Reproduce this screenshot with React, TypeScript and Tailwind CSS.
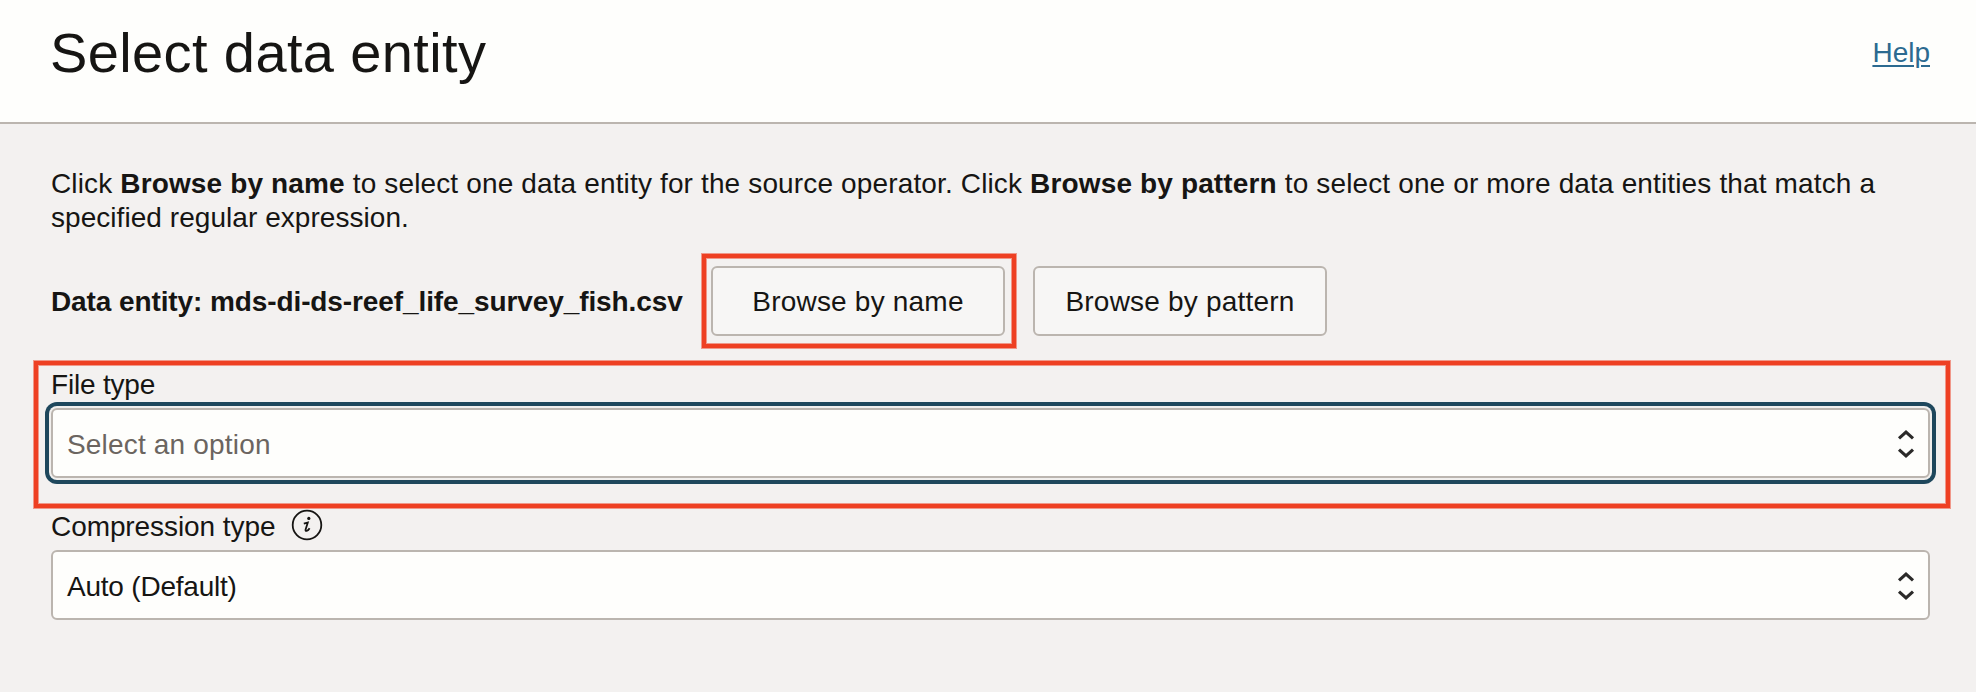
import React from "react";

function Chevrons() {
  return (
    <svg width="20" height="32" viewBox="0 0 20 32" fill="none" stroke="#2b2a29" strokeWidth="3.1" className="shrink-0">
      <path d="M3 11.4 10 5 17 11.4" />
      <path d="M3 22.6 10 29 17 22.6" />
    </svg>
  );
}

function InfoIcon() {
  return (
    <svg width="32" height="32" viewBox="0 0 32 32" fill="none" stroke="#161513" className="shrink-0">
      <circle cx="16" cy="16" r="14.3" strokeWidth="1.8" />
      <circle cx="17.8" cy="9.4" r="1.6" fill="#161513" stroke="none" />
      <path d="M12.8 14.6 16.8 13.6 14.6 20.4Q14.2 22.3 15.7 21.8 17.4 21.2 18.6 19.2" strokeWidth="1.8" />
    </svg>
  );
}

function Highlight({ className }: { className: string }) {
  return (
    <div
      className={`pointer-events-none absolute border-4 border-[#ee4023] shadow-[0_0_0_1px_#ee402380,inset_0_0_0_1px_#ee402380] ${className}`}
    />
  );
}

function Button({ children }: { children: React.ReactNode }) {
  return (
    <button className="h-[70px] w-[294px] rounded-[6px] border-2 border-[#bbb5af] bg-[#f7f6f5] pt-[2px] text-center tracking-[0.2px]">
      {children}
    </button>
  );
}

function Select({ children, focused = false }: { children: React.ReactNode; focused?: boolean }) {
  return (
    <div
      className={`flex h-[70px] items-center justify-between rounded-[6px] border-2 border-[#bbb5af] bg-[#fefefc] pr-3 pl-[14px] ${
        focused ? "text-[#6b6560] shadow-[0_0_0_2px_#f1efed,0_0_0_6px_#1e475c]" : ""
      }`}
    >
      {children}
      <Chevrons />
    </div>
  );
}

export default function App() {
  return (
    <div className="flex h-[692px] w-[1976px] flex-col overflow-hidden bg-[#f3f1f0] font-['Liberation_Sans',Arial,sans-serif] text-[28px] leading-[34px] text-[#161513]">
      <header className="flex h-[124px] shrink-0 justify-between border-b-2 border-[#bbb5af] bg-[#fefefc] pr-[46px] pl-[50px]">
        <h1 className="pt-[21px] text-[56px] leading-[64px] tracking-[0.38px]">Select data entity</h1>
        <a href="#" className="pt-[36px] text-[#2c6a90] underline decoration-2 underline-offset-[3px]">
          Help
        </a>
      </header>
      <main className="flex flex-col pt-[43px] pr-[46px] pl-[51px]">
        <p className="whitespace-nowrap">
          <span className="tracking-[0.142px]">
            Click <b>Browse by name</b> to select one data entity for the source operator. Click{" "}
            <b>Browse by pattern</b> to select one or more data entities that match a
          </span>
          <br />
          <span className="tracking-[0.05px]">specified regular expression.</span>
        </p>
        <div className="mt-[31px] flex items-center">
          <b className="w-[660px] pt-[2px] tracking-[-0.1px] whitespace-nowrap">
            Data entity: mds-di-ds-reef_life_survey_fish.csv
          </b>
          <div className="relative mr-7">
            <Button>Browse by name</Button>
            <Highlight className="-top-3 -right-[11px] -bottom-3 -left-[9px]" />
          </div>
          <Button>Browse by pattern</Button>
        </div>
        <section className="relative mt-[32px] flex flex-col">
          <label className="mb-[6px] tracking-[-0.2px]">File type</label>
          <Select focused>
            <span className="pt-[3px] tracking-[0.18px]">Select an option</span>
          </Select>
          <Highlight className="-top-[7px] -right-5 -bottom-[30px] -left-[17px]" />
        </section>
        <div className="mt-[30px] mb-[8px] flex h-[34px] items-center gap-[16px]">
          <span className="pt-[3px] tracking-[-0.08px]">Compression type</span>
          <InfoIcon />
        </div>
        <Select>
          <span className="pt-[3px] tracking-[-0.22px]">Auto (Default)</span>
        </Select>
      </main>
    </div>
  );
}
